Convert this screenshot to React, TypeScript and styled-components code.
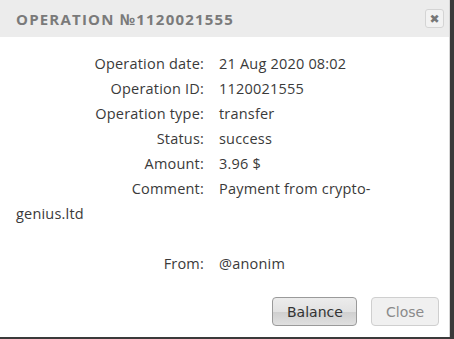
import React from "react";
import styled, { createGlobalStyle } from "styled-components";

const Global = createGlobalStyle`
  html, body { margin: 0; padding: 0; background: #3a3a3a; }
  body { width: 454px; height: 339px; overflow: hidden; }
`;

const Dialog = styled.div`
  width: 450px;
  height: 337px;
  background: #fff;
  border-right: 1px solid #d6d6d6;
  box-sizing: border-box;
  display: flex;
  flex-direction: column;
`;

const Header = styled.div`
  height: 37px;
  background: #ececec;
  display: flex;
  align-items: center;
  justify-content: space-between;
  padding: 0 5px 0 16px;
  box-sizing: border-box;
`;

const Title = styled.div`
  font-family: "Open Sans", Lato, sans-serif;
  font-weight: 700;
  font-size: 15px;
  letter-spacing: 1.2px;
  color: #7a7a7a;
  text-transform: uppercase;
  padding-top: 1px;
`;

const CloseX = styled.button`
  width: 19px;
  height: 19px;
  border: 1px solid #d4d4d4;
  border-radius: 3px;
  background: #f2f2f2;
  color: #777;
  font-family: "DejaVu Sans", sans-serif;
  font-weight: 700;
  font-size: 12px;
  line-height: 16px;
  padding: 0;
  display: flex;
  align-items: center;
  justify-content: center;
`;

const Body = styled.div`
  flex: 1;
  padding: 14px 30px 0 16px;
  font-family: "Open Sans", Lato, sans-serif;
  font-size: 14.5px;
  letter-spacing: 0.2px;
  color: #3a3a3a;
`;

const Row = styled.div`
  line-height: 25px;
  min-height: 25px;
`;

const Label = styled.span`
  display: inline-block;
  width: 188px;
  text-align: right;
  margin-right: 15px;
`;

const Footer = styled.div`
  display: flex;
  justify-content: flex-end;
  gap: 14px;
  padding: 0 10px 11px 0;
`;

const Button = styled.button<{ $primary?: boolean }>`
  height: 29px;
  padding: 0 14px;
  border-radius: 4px;
  font-family: "DejaVu Sans", sans-serif;
  font-size: 14px;
  border: 1px solid ${(p) => (p.$primary ? "#9a9a9a" : "#cfcfcf")};
  color: ${(p) => (p.$primary ? "#333" : "#8a8a8a")};
  background: ${(p) =>
    p.$primary
      ? "linear-gradient(#ececec 0%, #e2e2e2 50%, #cfcfcf 52%, #e0e0e0 100%)"
      : "#f0f0f0"};
  width: ${(p) => (p.$primary ? "85px" : "68px")};
`;

const rows: [string, string][] = [
  ["Operation date:", "21 Aug 2020 08:02"],
  ["Operation ID:", "1120021555"],
  ["Operation type:", "transfer"],
  ["Status:", "success"],
  ["Amount:", "3.96 $"],
  ["Comment:", "Payment from crypto-genius.ltd"],
];

export default function App() {
  return (
    <>
      <Global />
      <Dialog>
        <Header>
          <Title>Operation №1120021555</Title>
          <CloseX>✖</CloseX>
        </Header>
        <Body>
          {rows.map(([l, v]) => (
            <Row key={l}>
              <Label>{l}</Label>
              {v}
            </Row>
          ))}
          <Row />
          <Row>
            <Label>From:</Label>@anonim
          </Row>
        </Body>
        <Footer>
          <Button $primary>Balance</Button>
          <Button>Close</Button>
        </Footer>
      </Dialog>
    </>
  );
}
